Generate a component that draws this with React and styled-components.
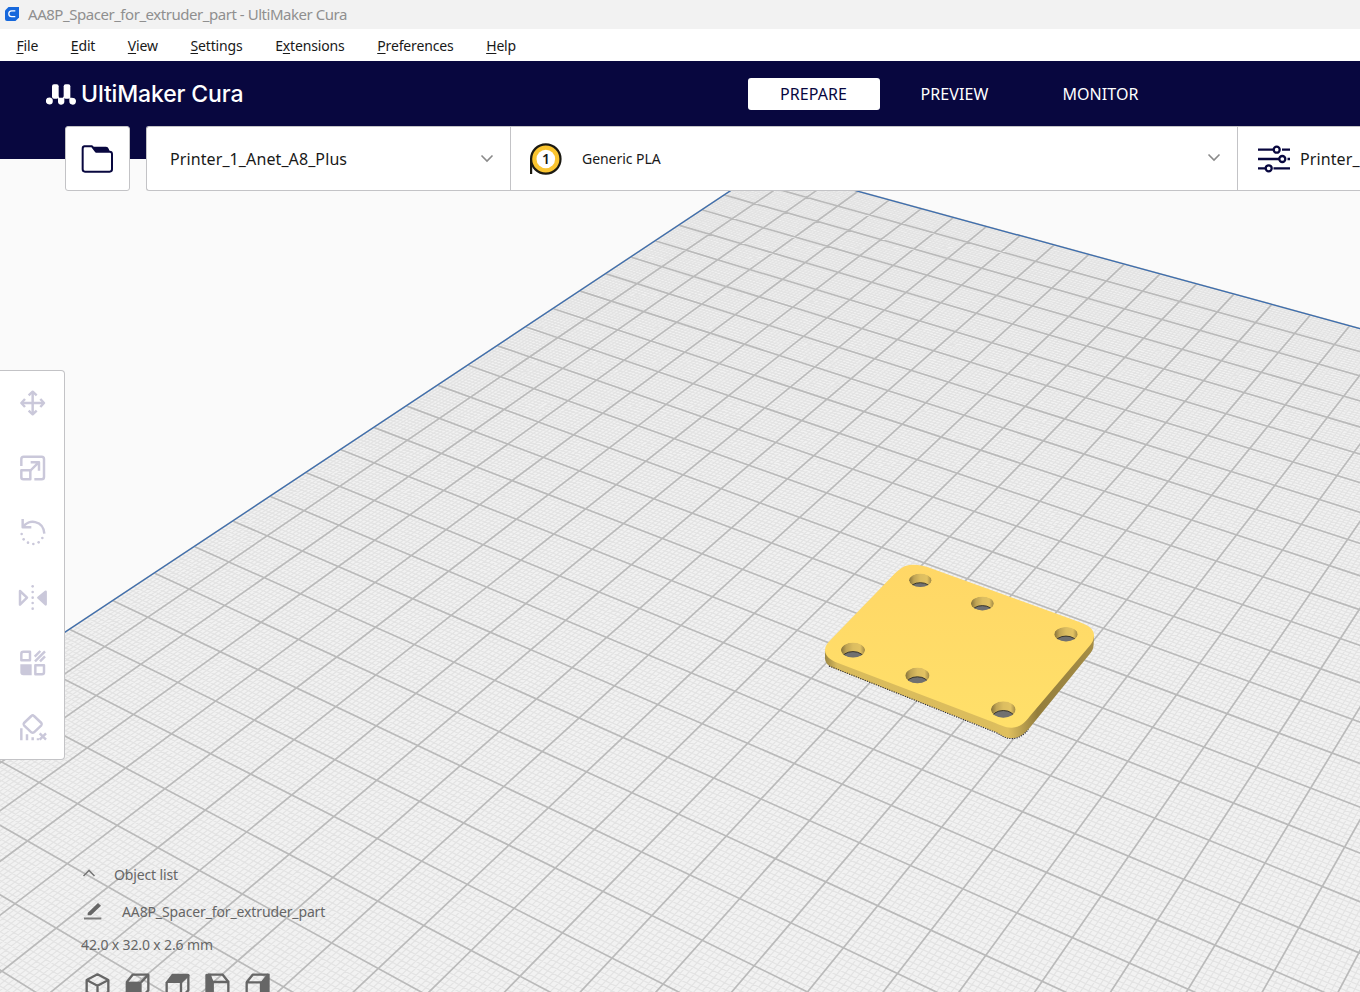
import React from 'react';
import styled, { createGlobalStyle, css } from 'styled-components';

const NAVY = '#08073f';
const DISABLED = '#cac8da';
const MUTED = '#666666';

const GlobalStyle = createGlobalStyle`
  * { box-sizing: border-box; }
  body { margin: 0; overflow: hidden; }
  svg { display: block; flex: none; }
`;

/* ---------- window chrome ---------- */

const Window = styled.div`
  display: flex;
  flex-direction: column;
  width: 1360px;
  height: 992px;
  overflow: hidden;
  background: #fafafa;
  color: #191919;
  font-family: 'Noto Sans', sans-serif;
  font-size: 14px;
  white-space: nowrap;
`;

const TitleBar = styled.div`
  display: flex;
  align-items: center;
  flex: none;
  gap: 9px;
  height: 29px;
  padding: 0 0 2px 5px;
  background: #f2f2f2;
  color: #8f8f8f;
  font-size: 15px;
  letter-spacing: -0.46px;
`;

const MenuBar = styled.nav`
  display: flex;
  align-items: center;
  flex: none;
  gap: 32.6px;
  height: 32px;
  padding: 2px 0 0 16.4px;
  background: #ffffff;
  letter-spacing: -0.15px;
`;

const MenuItem = styled.span`
  line-height: 20px;
  u { text-underline-offset: 2px; }
`;

const Workspace = styled.main`
  position: relative;
  flex: 1;
  display: flex;
  flex-direction: column;
  align-items: flex-start;
`;

const Viewport = styled.svg`
  position: absolute;
  top: 0;
  left: 0;
`;

const Header = styled.header`
  position: relative;
  display: flex;
  flex: none;
  width: 1360px;
  height: 98px;
  padding: 16px 0 0 46px;
  background: ${NAVY};
`;

const Brand = styled.div`
  display: flex;
  gap: 5px;
  width: 701.5px;
  height: 34px;
  align-items: center;
  color: #ffffff;
  font-family: 'Inter', sans-serif;
  font-size: 23px;
  font-weight: 500;
  letter-spacing: -0.14px;
`;

const Stages = styled.div`
  display: flex;
  gap: 9px;
  padding-top: 1px;
`;

const StageTab = styled.div`
  display: flex;
  align-items: center;
  justify-content: center;
  width: ${(p) => p.$width}px;
  height: 32px;
  border-radius: 3px;
  font-size: 16px;
  letter-spacing: 0.08px;
  color: ${(p) => (p.$active ? NAVY : '#ffffff')};
  background: ${(p) => (p.$active ? '#ffffff' : 'transparent')};
`;

/* ---------- configuration bar ---------- */

const ConfigBar = styled.div`
  position: relative;
  display: flex;
  flex: none;
  width: 1360px;
  margin-top: -33px;
  padding-left: 65px;
  overflow: hidden;
`;

const panel = css`
  flex: none;
  background: #ffffff;
  border: 1px solid #c3c3c6;
`;

const OpenFileButton = styled.div`
  ${panel}
  display: flex;
  align-items: center;
  justify-content: center;
  width: 65px;
  height: 65px;
  margin-right: 16px;
  border-radius: 3px;
`;

const PrinterSelector = styled.div`
  ${panel}
  display: flex;
  align-items: center;
  justify-content: space-between;
  width: 365px;
  height: 65px;
  padding: 0 17px 0 23px;
  border-right: 0;
  border-radius: 3px 0 0 3px;
  font-size: 16px;
  letter-spacing: 0.1px;
`;

const MaterialSelector = styled.div`
  ${panel}
  display: flex;
  align-items: center;
  width: 728px;
  height: 65px;
  margin-left: -1px;
  padding: 0 16px 1px 17px;
  letter-spacing: -0.05px;
`;

const MaterialName = styled.span`
  flex: 1;
  margin-left: 19px;
`;

const SettingsSelector = styled.div`
  ${panel}
  display: flex;
  align-items: center;
  flex: none;
  gap: 9px;
  width: 360px;
  height: 65px;
  margin-left: -1px;
  padding-left: 19px;
  font-size: 16px;
  letter-spacing: 0.1px;
`;

/* ---------- tools ---------- */

const ToolPanel = styled.div`
  ${panel}
  position: relative;
  width: 65px;
  height: 390px;
  margin-top: 179px;
  border-left: 0;
  border-radius: 0 4px 4px 0;
`;

const ToolButton = styled.div`
  display: flex;
  align-items: center;
  justify-content: center;
  width: 65px;
  height: 65px;
  &:first-child { margin-top: -1px; }
`;

/* ---------- object info ---------- */

const ObjectPanel = styled.section`
  position: relative;
  display: flex;
  flex-direction: column;
  margin-top: 99px;
  padding-left: 81px;
  color: ${MUTED};
  letter-spacing: -0.13px;
`;

const ObjectRow = styled.div`
  display: flex;
  align-items: center;
  height: ${(p) => p.$height}px;
  padding-left: ${(p) => p.$indent || 0}px;
  gap: ${(p) => p.$gap || 0}px;
`;

const CameraBar = styled.div`
  display: flex;
  gap: 15px;
  margin-top: 18px;
  padding-left: 4px;
`;

/* ---------- build plate geometry ---------- */

const TOP = 61;
const CELLS = 30;

const project = (u, v) => {
  const d = 1 - 0.0080116462 * u - 0.013509599 * v;
  return [
    (767.14329 + 23.454443 * u - 31.272601 * v) / d,
    (166.42802 + 6.7603411 * u + 11.621305 * v) / d,
  ];
};

const point = (u, v) => project(u, v).map((n) => n.toFixed(2)).join(' ');

const gridPath = (step, skip) => {
  const parts = [];
  const count = Math.round(CELLS / step);
  for (let i = 0; i <= count; i += 1) {
    if (skip && i % skip === 0) continue;
    const t = i * step;
    parts.push(`M${point(t, 0)}L${point(t, CELLS)}`);
    parts.push(`M${point(0, t)}L${point(CELLS, t)}`);
  }
  return parts.join('');
};

const MINOR = gridPath(0.1, 10);
const MAJOR = gridPath(1);
const PLATE = `M${point(0, 0)}L${point(CELLS, 0)}L${point(CELLS, CELLS)}L${point(0, CELLS)}Z`;
const EDGE = `M${point(0, CELLS)}L${point(0, 0)}L${point(CELLS, 0)}`;

const HOLES = [
  [920.3, 580.3, 11.3, 6.8],
  [982.4, 603.4, 11.4, 7],
  [1066, 634.2, 11.7, 7.3],
  [853, 650, 12, 7.6],
  [917.4, 675.4, 12.1, 7.8],
  [1003.3, 709.5, 12.3, 8.2],
];

const TOP_FACE =
  'M891.7 576.7C900 568 905 564.8 912 564.7C918 564.4 922 565.2 928 567.3L1080 622.2C1090 626 1094.3 630 1094 636C1093.8 640 1092 643 1089.5 646L1030 716C1024 724 1019 727.5 1012 727.7C1006 728 1001 725.5 994 722.6L838 663C829 659.5 825 655 825 650.5C825 646 827 643.5 830.5 640Z';
const BODY =
  'M825 650V658.5C825.4 664 829 666.4 835 668.7L994 731.5C1001 734.5 1005 738.6 1012 738.3C1019 738.2 1023.6 735 1028.5 729.3L1088.5 655.5C1092 651.5 1093.4 649 1093.6 645L1094 636L1010 690L840 640Z';

const Scene = () => (
  <Viewport width="1360" height="931" viewBox={`0 ${TOP} 1360 931`}>
    <defs>
      <linearGradient id="side" gradientUnits="userSpaceOnUse" x1="825" x2="1094" y1="0" y2="0">
        <stop offset="0" stopColor="#9b8644" />
        <stop offset="0.045" stopColor="#d9bb5c" />
        <stop offset="0.62" stopColor="#dcbd5d" />
        <stop offset="0.68" stopColor="#e0c05e" />
        <stop offset="0.74" stopColor="#b59b4c" />
        <stop offset="0.79" stopColor="#947e3c" />
        <stop offset="1" stopColor="#a58d46" />
      </linearGradient>
      <linearGradient id="face" x1="0" x2="0" y1="0" y2="1">
        <stop offset="0" stopColor="#ffd766" />
        <stop offset="1" stopColor="#ffe06a" />
      </linearGradient>
      <linearGradient id="bore" x1="0" x2="1" y1="0" y2="0">
        <stop offset="0" stopColor="#85713a" />
        <stop offset="0.22" stopColor="#c0a454" />
        <stop offset="0.5" stopColor="#dcbd60" />
        <stop offset="0.8" stopColor="#e2c262" />
        <stop offset="1" stopColor="#9f8745" />
      </linearGradient>
      {HOLES.map(([x, y, rx, ry]) => (
        <clipPath id={`hole${x}`} key={x}>
          <ellipse cx={x} cy={y} rx={rx} ry={ry} />
        </clipPath>
      ))}
    </defs>
    <path d={PLATE} fill="#f2f2f2" />
    <path d={MINOR} stroke="#e3e3e3" strokeWidth="1.2" fill="none" />
    <path d={MAJOR} stroke="#bababa" strokeWidth="1.7" fill="none" />
    <path d={EDGE} stroke="#3a6db0" strokeWidth="1.2" fill="none" />
    <path d={BODY} fill="url(#side)" />
    <path
      d="M829 666L994 731.8C1001 734.7 1005 738.8 1012 738.6C1019 738.4 1023.6 735 1028.5 729.5"
      fill="none"
      stroke="#2a2a38"
      strokeWidth="1.1"
      strokeDasharray="1.2 1.2"
    />
    <path d={TOP_FACE} fill="url(#face)" />
    {HOLES.map(([x, y, rx, ry]) => (
      <g key={x} clipPath={`url(#hole${x})`}>
        <ellipse cx={x} cy={y} rx={rx} ry={ry} fill="url(#bore)" />
        <ellipse cx={x} cy={y + 9.2} rx={rx - 0.6} ry={ry} fill="#707070" stroke="#2f2c25" strokeWidth="0.9" />
      </g>
    ))}
  </Viewport>
);

/* ---------- icons ---------- */

const AppIcon = () => (
  <svg width="14" height="14" viewBox="0 0 14 14">
    <path d="M3.5 0H14V10.5L10.5 14H2A2 2 0 0 1 0 12V3.5Z" fill="#1668dc" />
    <path d="M10.3 3.900H6.700A2.900 2.900 0 0 0 6.700 9.700H10.3" fill="none" stroke="#fff" strokeWidth="1.3" />
  </svg>
);

const BrandMark = () => (
  <svg width="30" height="21" viewBox="0 0 90 63" fill="#fff">
    <circle cx="10" cy="51" r="10.5" />
    <rect x="18" y="1" width="20" height="43" rx="6" />
    <rect x="53" y="1" width="20" height="43" rx="6" />
    <path d="M36 36L40 41H50L55 36V55Q54 62 46 62H44Q37 62 36 55Z" />
    <path d="M70 38L74 41Q90 40 90 51Q90 62 80 62Q70 62 70 52Z" />
  </svg>
);

const FolderIcon = () => (
  <svg width="33" height="29" viewBox="0 0 99 87">
    <path
      d="M8 7H33L45 23H86Q93 23 93 30V76Q93 83 86 83H12Q5 83 5 76V14Q5 7 12 7"
      fill="none"
      stroke={NAVY}
      strokeWidth="6"
      strokeLinejoin="round"
    />
    <path d="M33 8H75Q81 8 83 14L87 24H47Z" fill={NAVY} />
  </svg>
);

const Chevron = ({ up }) => (
  <svg width="14" height="10" viewBox="0 0 14 10">
    <path
      d={up ? 'M1.5 7L7 1.500L12.5 7' : 'M1.5 1.500L7 7L12.5 1.500'}
      fill="none"
      stroke={up ? '#777' : '#8a8a8a'}
      strokeWidth="1.6"
    />
  </svg>
);

const SpoolBadge = styled.div`
  position: relative;
  display: flex;
  align-items: center;
  justify-content: center;
  width: 35px;
  height: 33px;
  font-size: 14px;
  font-weight: 600;
  svg { position: absolute; top: 0; left: 0; }
  span { position: relative; left: 0.5px; top: 0.5px; }
`;

const SpoolIcon = () => (
  <SpoolBadge>
    <svg width="35" height="33" viewBox="0 0 35 33">
      <path d="M3.1 16V32" stroke="#1c1a12" strokeWidth="2.2" />
      <circle cx="17.8" cy="17" r="14.7" fill="#fbc530" stroke="#1c1a12" strokeWidth="2.2" />
      <circle cx="17.8" cy="17" r="9.3" fill="#fff" />
    </svg>
    <span>1</span>
  </SpoolBadge>
);

const SlidersIcon = () => (
  <svg width="34" height="30" viewBox="0 0 34 30" fill="none" stroke={NAVY} strokeWidth="2.3">
    <path d="M1 5.7H17M25 5.7H33M1 15H22M30.5 15H33M1 24.3H9M16.500 24.3H33" />
    <circle cx="19.7" cy="5.7" r="3" />
    <circle cx="25.3" cy="15" r="3" />
    <circle cx="11.7" cy="24.3" r="3" />
  </svg>
);

const PencilIcon = () => (
  <svg width="18" height="18" viewBox="0 0 54 54">
    <path d="M11 40V33L42 3L51 11L21 40Z" fill={MUTED} />
    <path d="M0 49.500H52" stroke="#7c7c7c" strokeWidth="6" />
  </svg>
);

const Dots = ({ at, r = 3.9 }) => at.map(([x, y]) => <circle key={`${x}-${y}`} cx={x} cy={y} r={r} fill={DISABLED} stroke="none" />);

const TOOLS = {
  move: (
    <>
      <path d="M50 18V84M17 51H83" />
      <path d="M38 28L50 17L62 28M38 74L50 85L62 74M27 39L16 51L27 63M73 39L84 51L73 63" />
    </>
  ),
  scale: (
    <>
      <path d="M16 45V24Q16 17 23 17H77Q84 17 84 24V78Q84 85 77 85H55" />
      <path d="M16 58H43V85H22Q16 85 16 79Z" />
      <path d="M42 60L68 34M44 34H69V59" />
    </>
  ),
  rotate: (
    <>
      <path d="M20 9V34H46" />
      <path d="M21 33C37 8 82 12 85 53" />
      <Dots at={[[17, 54], [23, 70], [36, 80], [52, 84], [68, 79], [79, 66]]} />
    </>
  ),
  mirror: (
    <>
      <path d="M12 30L33 50L12 71Z" />
      <Dots at={[[50, 16], [50, 33], [50, 50], [50, 66], [50, 83]]} />
      <path d="M89 32L67 50L89 70Z" fill={DISABLED} />
    </>
  ),
  perModel: (
    <>
      <path d="M22 17H42V43H16V23Q16 17 22 17Z" />
      <path d="M56 32L73 15M57 46L87 16M72 46L87 31" />
      <path d="M13 55H47V88H22Q13 88 13 79Z" fill={DISABLED} stroke="none" />
      <path d="M58 58H84V79Q84 85 78 85H58Z" />
    </>
  ),
  supportBlocker: (
    <>
      <path d="M46 15Q50 11 54 15L76 36Q79 40 76 43L54 64Q50 67 46 64L24 43Q21 40 24 36Z" />
      <path d="M16 52V88M33 70V88M50 79V88M66 82V88" />
      <path d="M71 67L90 86M90 67L71 86" />
    </>
  ),
};

const ToolIcon = ({ name }) => (
  <svg width="33" height="33" viewBox="0 0 99 99" fill="none" stroke={DISABLED} strokeWidth="7.4" strokeLinejoin="round">
    {TOOLS[name]}
  </svg>
);

const VIEWS = {
  iso: <path d="M36.500 4L69 21V57L36.500 74L4 57V21ZM4 21L36.500 38L69 21M36.500 38V74" />,
  front: (
    <>
      <path d="M4 28L22 5H69V52L47 74" />
      <path d="M47 28L67 7" />
      <path d="M1 26H49V76H1Z" fill={MUTED} stroke="none" />
    </>
  ),
  top: (
    <>
      <path d="M1 28L20 2H68Q73 2 73 8L50 30H1Z" fill={MUTED} stroke="none" />
      <path d="M4 28V74H47V28M69 7V52L47 74" />
    </>
  ),
  left: (
    <>
      <path d="M0 6Q0 2 5 2H16L24 26V76H0Z" fill={MUTED} stroke="none" />
      <path d="M8 5H52L69 26V74H22V27H69M8 7L22 27" />
    </>
  ),
  right: (
    <>
      <path d="M4 28L22 5H69M4 28V74H47V28Z" />
      <path d="M46 27L66 2H73V76H46Z" fill={MUTED} stroke="none" />
    </>
  ),
};

const ViewIcon = ({ name }) => (
  <svg width="25" height="25" viewBox="-1 0 75 75" fill="none" stroke={MUTED} strokeWidth="7" strokeLinejoin="round">
    {VIEWS[name]}
  </svg>
);

/* ---------- page ---------- */

const MENU = [
  ['', 'F', 'ile'],
  ['', 'E', 'dit'],
  ['', 'V', 'iew'],
  ['', 'S', 'ettings'],
  ['E', 'x', 'tensions'],
  ['', 'P', 'references'],
  ['', 'H', 'elp'],
];

export default function App() {
  return (
    <Window>
      <GlobalStyle />
      <TitleBar>
        <AppIcon />
        <span>AA8P_Spacer_for_extruder_part - UltiMaker Cura</span>
      </TitleBar>
      <MenuBar>
        {MENU.map(([before, key, after]) => (
          <MenuItem key={key}>
            {before}
            <u>{key}</u>
            {after}
          </MenuItem>
        ))}
      </MenuBar>
      <Workspace>
        <Scene />
        <Header>
          <Brand>
            <BrandMark />
            <span>UltiMaker Cura</span>
          </Brand>
          <Stages>
            <StageTab $width={132} $active>PREPARE</StageTab>
            <StageTab $width={132}>PREVIEW</StageTab>
            <StageTab $width={142}>MONITOR</StageTab>
          </Stages>
        </Header>
        <ConfigBar>
          <OpenFileButton>
            <FolderIcon />
          </OpenFileButton>
          <PrinterSelector>
            <span>Printer_1_Anet_A8_Plus</span>
            <Chevron />
          </PrinterSelector>
          <MaterialSelector>
            <SpoolIcon />
            <MaterialName>Generic PLA</MaterialName>
            <Chevron />
          </MaterialSelector>
          <SettingsSelector>
            <SlidersIcon />
            <span>Printer_1_Anet_A8_Plus</span>
          </SettingsSelector>
        </ConfigBar>
        <ToolPanel>
          {Object.keys(TOOLS).map((name) => (
            <ToolButton key={name}>
              <ToolIcon name={name} />
            </ToolButton>
          ))}
        </ToolPanel>
        <ObjectPanel>
          <ObjectRow $height={30} $indent={1} $gap={18}>
            <Chevron up />
            <span>Object list</span>
          </ObjectRow>
          <ObjectRow $height={44} $indent={3} $gap={20}>
            <PencilIcon />
            <span>AA8P_Spacer_for_extruder_part</span>
          </ObjectRow>
          <ObjectRow $height={22}>42.0 x 32.0 x 2.6 mm</ObjectRow>
          <CameraBar>
            {Object.keys(VIEWS).map((name) => (
              <ViewIcon key={name} name={name} />
            ))}
          </CameraBar>
        </ObjectPanel>
      </Workspace>
    </Window>
  );
}
